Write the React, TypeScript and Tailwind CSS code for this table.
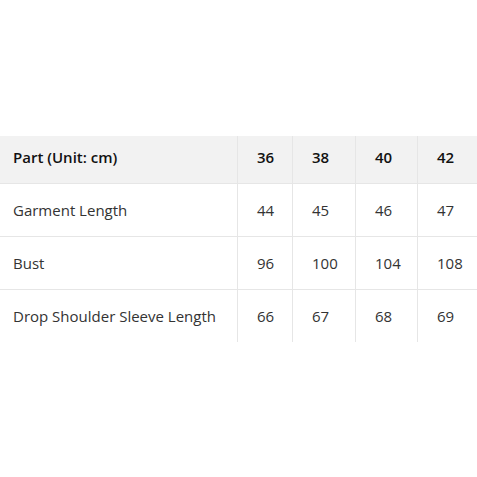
import React from "react";

const header = ["Part (Unit: cm)", "36", "38", "40", "42"];
const rows = [
  ["Garment Length", "44", "45", "46", "47"],
  ["Bust", "96", "100", "104", "108"],
  ["Drop Shoulder Sleeve Length", "66", "67", "68", "69"],
];

function Row({ cells, head, first }: { cells: string[]; head?: boolean; first?: boolean }) {
  return (
    <div
      className={
        "grid grid-cols-[237px_55px_63px_62px_60px] " +
        (head ? "h-[47px] bg-[#f2f2f2] font-semibold text-[#111111]" : "h-[53px] text-[#333333]") +
        (first ? "" : " border-t border-[#e6e6e6]")
      }
    >
      {cells.map((c, i) => (
        <div
          key={i}
          className={
            "flex items-center whitespace-nowrap " +
            (head ? "pb-[3px] " : "pt-[2px] ") +
            (i === 0 ? "pl-[13px]" : "pl-[19px] border-l border-[#e6e6e6]")
          }
        >
          {c}
        </div>
      ))}
    </div>
  );
}

export default function App() {
  return (
    <div
      className="flex h-[477px] w-[477px] items-center bg-white text-[15px]"
      style={{ fontFamily: '"Open Sans", "Noto Sans", sans-serif' }}
    >
      <div className="w-[477px]">
        <Row cells={header} head first />
        {rows.map((r, i) => (
          <Row key={i} cells={r} />
        ))}
      </div>
    </div>
  );
}
